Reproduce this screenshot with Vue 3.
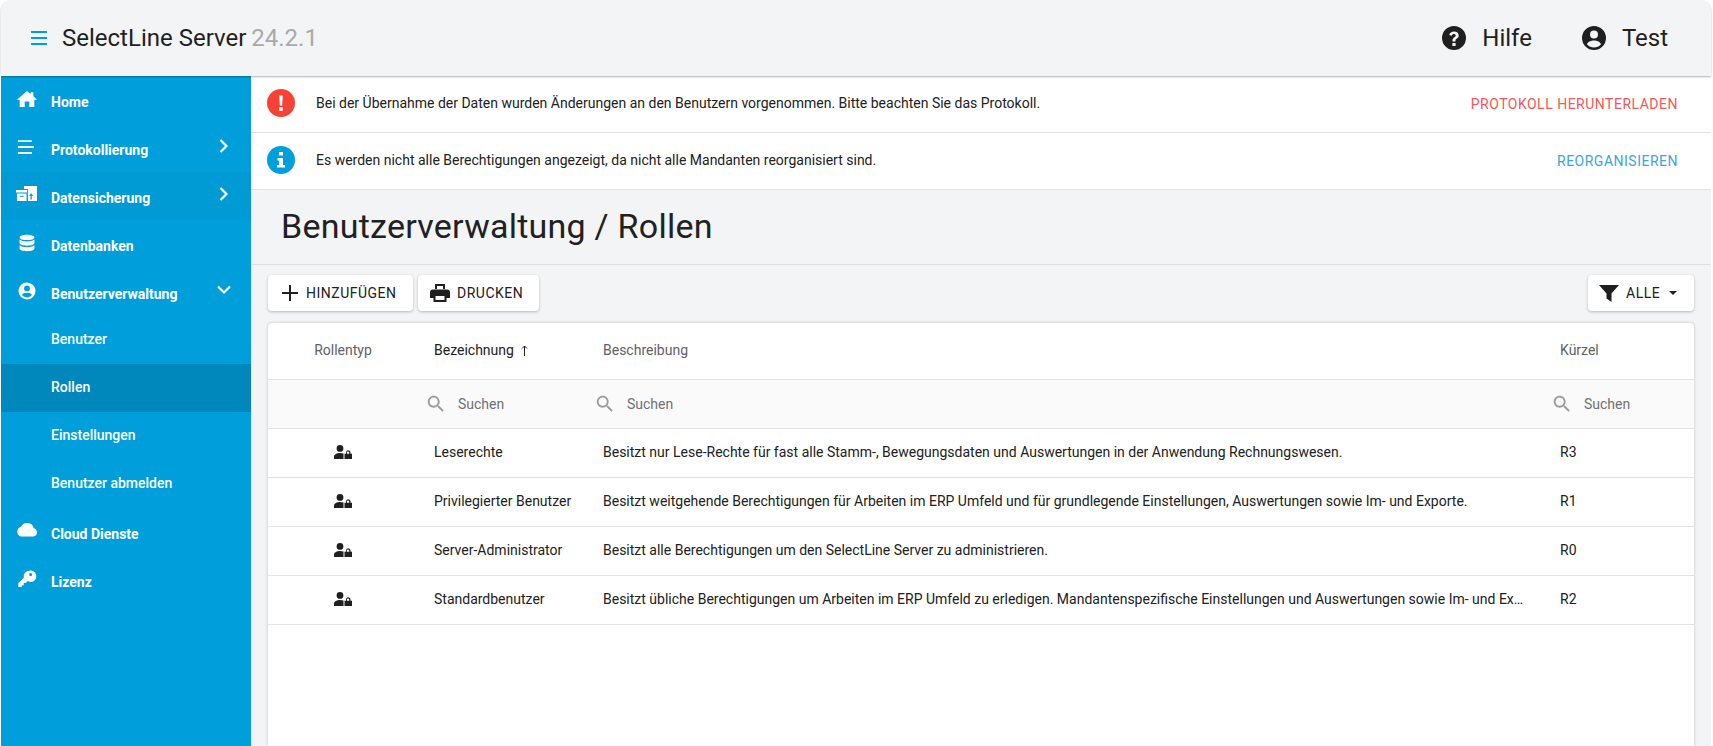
<script setup>
const navTop = [
  { label: 'Home', icon: 'home' },
  { label: 'Protokollierung', icon: 'list', arrow: 'right' },
  { label: 'Datensicherung', icon: 'backup', arrow: 'right', hover: true },
  { label: 'Datenbanken', icon: 'db' },
  { label: 'Benutzerverwaltung', icon: 'user', arrow: 'down' },
]
const navSub = [
  { label: 'Benutzer' },
  { label: 'Rollen', active: true },
  { label: 'Einstellungen' },
  { label: 'Benutzer abmelden' },
]
const navBottom = [
  { label: 'Cloud Dienste', icon: 'cloud' },
  { label: 'Lizenz', icon: 'key' },
]
const rows = [
  { name: 'Leserechte', desc: 'Besitzt nur Lese-Rechte für fast alle Stamm-, Bewegungsdaten und Auswertungen in der Anwendung Rechnungswesen.', code: 'R3' },
  { name: 'Privilegierter Benutzer', desc: 'Besitzt weitgehende Berechtigungen für Arbeiten im ERP Umfeld und für grundlegende Einstellungen, Auswertungen sowie Im- und Exporte.', code: 'R1' },
  { name: 'Server-Administrator', desc: 'Besitzt alle Berechtigungen um den SelectLine Server zu administrieren.', code: 'R0' },
  { name: 'Standardbenutzer', desc: 'Besitzt übliche Berechtigungen um Arbeiten im ERP Umfeld zu erledigen. Mandantenspezifische Einstellungen und Auswertungen sowie Im- und Exporte.', code: 'R2' },
]
const icons = {
  home: 'M12 3.300 L16 6.600 V4.500 H19 V9.100 L23 12.800 H20 V20.700 H14.500 V14.800 H9.500 V20.700 H4 V12.800 H1 Z',
  list: 'M2 4.500h15.300v2.100H2z M2 11h17.500v2.100H2z M2 17.500h15.300v2.100H2z',
  backup: 'M8.700 2.200H22.900V18.500H13V5.500H8.700z M16.500 10L18.800 12.800H17.200V17H15.800V12.800H14.200z M0 6.500H12V9.300H0z M1 10.400H11.500V18.500H1z M4 12.800h4.500V14H4z',
  db: 'M12 3c4.500 0 8.100 1.300 8.100 2.900s-3.600 2.900-8.100 2.900S3.900 7.500 3.900 5.900 7.500 3 12 3z M3.900 8.300c1.500 1.300 4.700 2.100 8.100 2.100s6.600-.8 8.100-2.100V12c0 1.600-3.600 2.900-8.100 2.900S3.900 13.600 3.900 12z M3.900 14.400c1.500 1.300 4.700 2.100 8.100 2.100s6.600-.8 8.100-2.100v3.700c0 1.600-3.600 2.900-8.100 2.900s-8.100-1.300-8.100-2.900z',
  user: 'M12 2.700a9.300 9.300 0 1 0 0 18.600a9.300 9.300 0 0 0 0-18.600z M12 6a3.200 3.200 0 1 1 0 6.400a3.200 3.200 0 0 1 0-6.400z M12 19a7 7 0 0 1-5.500-2.700c.3-1.600 3.200-2.500 5.500-2.500s5.200.9 5.500 2.500A7 7 0 0 1 12 19z',
  cloud: 'M19.400 9A7.500 7.500 0 0 0 5.400 7.400A5.500 5.500 0 0 0 5.500 18h13.500a4.600 4.600 0 0 0 .4-9z',
  key: 'M14.500 3a6.200 6.200 0 0 0-6 7.700L2.500 16.700V20.700h3.700V18.700h2.300v-2.300h2.300l1.900-2.100A6.200 6.200 0 1 0 14.500 3z M16 5.500a1.700 1.700 0 1 1 0 3.400a1.700 1.700 0 0 1 0-3.400z',
}
</script>

<template>
  <div class="shell">
    <header class="topbar">
      <div class="brand">
        <svg class="burger" viewBox="0 0 16 14" width="16" height="14"><path d="M0 0h16v2H0zM0 6h16v2H0zM0 12h16v2H0z" /></svg>
        <span class="product">SelectLine Server <span class="version">24.2.1</span></span>
      </div>
      <div class="top-actions">
        <div class="top-action">
          <svg viewBox="0 0 24 24" width="24" height="24"><path fill-rule="evenodd" d="M12 0a12 12 0 1 0 0 24a12 12 0 0 0 0-24z M10.500 15.500h3v-1c0-1 .6-1.400 1.400-2c.9-.7 1.800-1.500 1.800-3.100c0-2.500-2-3.900-4.700-3.900c-2.400 0-4.200 1.200-4.800 3.500l2.600.8c.3-1.200 1-1.800 2.100-1.800c1.100 0 1.800.6 1.800 1.500c0 .8-.5 1.200-1.200 1.700c-1.100.8-2 1.500-2 3.100z M10.400 17h3.200v2.900h-3.200z" /></svg>
          <span>Hilfe</span>
        </div>
        <div class="top-action">
          <svg viewBox="0 0 24 24" width="24" height="24"><path fill-rule="evenodd" d="M12 0a12 12 0 1 0 0 24a12 12 0 0 0 0-24z M12 4.500a4 4 0 1 1 0 8a4 4 0 0 1 0-8z M12 21.500a9.500 9.500 0 0 1-7-3.200c.4-2.300 4.300-3.800 7-3.800s6.600 1.500 7 3.800a9.500 9.500 0 0 1-7 3.200z" /></svg>
          <span>Test</span>
        </div>
      </div>
    </header>

    <div class="body">
      <nav class="sidebar">
        <div v-for="item in navTop" :key="item.label" class="nav-item" :class="{ hover: item.hover }">
          <svg class="nav-icon" viewBox="0 0 24 24" width="22" height="22"><path fill-rule="evenodd" :d="icons[item.icon]" /></svg>
          <span class="nav-label">{{ item.label }}</span>
          <svg v-if="item.arrow === 'right'" class="chev" viewBox="0 0 12 14" width="12" height="14"><path d="M2.500 1 L8.500 7 L2.500 13" /></svg>
          <svg v-if="item.arrow === 'down'" class="chev chev-down" viewBox="0 0 14 12" width="14" height="12"><path d="M1 2.500 L7 8.500 L13 2.500" /></svg>
        </div>
        <div v-for="item in navSub" :key="item.label" class="nav-sub" :class="{ active: item.active }">{{ item.label }}</div>
        <div v-for="item in navBottom" :key="item.label" class="nav-item">
          <svg class="nav-icon" viewBox="0 0 24 24" width="22" height="22"><path fill-rule="evenodd" :d="icons[item.icon]" /></svg>
          <span class="nav-label">{{ item.label }}</span>
        </div>
      </nav>

      <main class="main">
        <div class="notice">
          <span class="notice-icon red">
            <svg viewBox="0 0 28 28" width="28" height="28"><path d="M12.300 6.500h3.400l-.5 10h-2.400z M12.200 18.300h3.600v3.500h-3.600z" /></svg>
          </span>
          <span class="notice-text">Bei der Übernahme der Daten wurden Änderungen an den Benutzern vorgenommen. Bitte beachten Sie das Protokoll.</span>
          <span class="notice-action red-text">PROTOKOLL HERUNTERLADEN</span>
        </div>
        <div class="notice">
          <span class="notice-icon blue">
            <svg viewBox="0 0 28 28" width="28" height="28"><path d="M12 6h4v3.500h-4z M10.500 12h5.500v7h2v2.500h-8V19h2v-4.500h-1.500z" /></svg>
          </span>
          <span class="notice-text">Es werden nicht alle Berechtigungen angezeigt, da nicht alle Mandanten reorganisiert sind.</span>
          <span class="notice-action blue-text">REORGANISIEREN</span>
        </div>

        <div class="title-bar"><h1>Benutzerverwaltung / Rollen</h1></div>

        <div class="content">
          <div class="toolbar">
            <button class="btn">
              <svg viewBox="0 0 16 16" width="16" height="16"><path d="M7 0h2v7h7v2H9v7H7V9H0V7h7z" /></svg>
              <span>HINZUFÜGEN</span>
            </button>
            <button class="btn print">
              <svg viewBox="0 0 20 20" width="20" height="20"><path fill-rule="evenodd" d="M5 1h10v5h-2V3H7v3H5z M3 6.500h14a3 3 0 0 1 3 3V15h-3.500v4h-13v-4H0V9.500a3 3 0 0 1 3-3z M5.500 13v4h9v-4z" /></svg>
              <span>DRUCKEN</span>
            </button>
            <button class="btn filter">
              <svg viewBox="0 0 20 20" width="20" height="20"><path d="M0 2h20L12.500 10.500V19L7.500 15.500V10.500z" /></svg>
              <span>ALLE</span>
              <i class="caret"></i>
            </button>
          </div>

          <div class="card">
            <div class="tr head">
              <div class="td center">Rollentyp</div>
              <div class="td strong">Bezeichnung<svg class="sort" viewBox="0 0 7 11" width="7" height="11"><path d="M3.500 11V1M1 3.500L3.500 1L6 3.500" /></svg></div>
              <div class="td">Beschreibung</div>
              <div class="td">Kürzel</div>
            </div>
            <div class="tr search">
              <div class="td"></div>
              <div v-for="n in 3" :key="n" class="td search-cell">
                <svg viewBox="0 0 24 24" width="22" height="22"><path d="M15.500 14h-.79l-.28-.27C15.410 12.590 16 11.110 16 9.500 16 5.910 13.090 3 9.500 3S3 5.910 3 9.500 5.910 16 9.500 16c1.610 0 3.090-.59 4.230-1.570l.27.28v.79l5 4.990L20.490 19l-4.990-5zm-6 0C7.010 14 5 11.990 5 9.500S7.010 5 9.500 5 14 7.010 14 9.500 11.990 14 9.500 14z" /></svg>
                <span>Suchen</span>
              </div>
            </div>
            <div v-for="row in rows" :key="row.code" class="tr data">
              <div class="td center">
                <svg class="role" viewBox="0 0 18 14" width="18" height="14"><path d="M6 0a3.400 3.400 0 1 1 0 6.800a3.400 3.400 0 0 1 0-6.800z M0 14v-2.500C0 9.300 3.200 8 6 8c1.300 0 2.400.2 3.500.6V14z" /><path fill-rule="evenodd" d="M14 5.200a2.500 2.500 0 0 1 2.500 2.500V8.800H18V14h-7.500V8.800H12V7.700A2.500 2.500 0 0 1 14 5.200z M14 6.400a1.200 1.200 0 0 0-1.100 1.300v1.100h2.300V7.700A1.200 1.200 0 0 0 14 6.400z" /></svg>
              </div>
              <div class="td">{{ row.name }}</div>
              <div class="td ellipsis">{{ row.desc }}</div>
              <div class="td">{{ row.code }}</div>
            </div>
          </div>
        </div>
      </main>
    </div>
  </div>
</template>

<style>
html, body { margin: 0; background: #fff; overflow: hidden; }
</style>

<style scoped>
* { box-sizing: border-box; }
.shell {
  width: 1713px;
  height: 746px;
  padding: 0 2px 0 1px;
  display: flex;
  flex-direction: column;
  font-family: Roboto, "Liberation Sans", sans-serif;
  color: #212121;
  overflow: hidden;
}
.topbar {
  flex: 0 0 76px;
  display: flex;
  align-items: center;
  justify-content: space-between;
  background: #f3f4f6;
  border-radius: 10px 10px 0 0;
  box-shadow: 0 1px 2px rgba(0, 0, 0, .3);
  position: relative;
  z-index: 2;
  padding: 0 43px 0 30px;
}
.brand { display: flex; align-items: center; gap: 15px; }
.burger { fill: #009fdb; }
.product { font-size: 24px; color: #1f1f1f; line-height: 1; }
.version { color: #a9a9a9; margin-left: -1px; }
.top-actions { display: flex; gap: 50px; }
.top-action { display: flex; align-items: center; gap: 16px; font-size: 24px; }
.top-action svg { fill: #1f1f1f; }
.body { flex: 1; display: flex; min-height: 0; }
.sidebar { flex: 0 0 250px; background: #009fdb; color: #fff; }
.nav-item {
  height: 48px;
  display: flex;
  align-items: center;
  position: relative;
  padding-left: 15px;
  font-size: 14px;
  font-weight: 700;
}
.nav-item.hover { background: #009ad5; }
.nav-icon { fill: #fff; flex: none; margin-top: -2px; }
.nav-label { margin-left: 13px; margin-top: 4px; }
.chev { position: absolute; left: 217px; top: 15px; fill: none; stroke: #fff; stroke-width: 2.200; }
.chev-down { left: 216px; top: 16px; }
.nav-sub {
  height: 48px;
  display: flex;
  align-items: center;
  padding: 0 0 2px 50px;
  font-size: 14px;
  font-weight: 500;
}
.nav-sub.active { background: #0088bc; }
.main { flex: 1; min-width: 0; display: flex; flex-direction: column; background: #f3f4f6; }
.notice {
  flex: 0 0 57px;
  display: flex;
  align-items: center;
  background: #fff;
  border-bottom: 1px solid #e2e3e5;
  padding: 0 33px 0 16px;
  font-size: 14px;
}
.notice-icon { width: 28px; height: 28px; border-radius: 50%; flex: none; margin-top: -2px; }
.notice-icon svg { display: block; fill: #fff; }
.red { background: #f44336; }
.blue { background: #009fdb; }
.notice-text { margin-left: 21px; flex: 1; margin-top: -3px; }
.notice-action { font-size: 14px; letter-spacing: .5px; }
.red-text { color: #f2575a; }
.blue-text { color: #3da4dd; }
.title-bar {
  flex: 0 0 75px;
  border-bottom: 1px solid #dfe0e2;
  display: flex;
  align-items: center;
  padding: 0 0 2px 30px;
}
h1 { margin: 0; font-size: 34px; font-weight: 400; color: #212121; letter-spacing: .25px; }
.content { flex: 1; min-height: 0; display: flex; flex-direction: column; padding: 10px 17px 0 17px; }
.toolbar { flex: none; display: flex; gap: 5px; margin-bottom: 12px; }
.btn {
  height: 36px;
  display: flex;
  align-items: center;
  border: 0;
  border-radius: 4px;
  background: #fff;
  box-shadow: 0 1px 3px rgba(0, 0, 0, .25);
  font: 400 14px Roboto, sans-serif;
  letter-spacing: .5px;
  color: #212121;
  padding: 0 0 0 14px;
  gap: 8px;
  width: 145px;
}
.btn svg { fill: #1f1f1f; flex: none; }
.print { width: 121px; padding-left: 12px; gap: 7px; }
.filter { width: 106px; margin-left: auto; padding-left: 11px; gap: 7px; }
.caret { margin-left: 2px; border-left: 4px solid transparent; border-right: 4px solid transparent; border-top: 4px solid #212121; }
.card {
  flex: 1;
  background: #fff;
  border-radius: 4px 4px 0 0;
  box-shadow: 0 0 3px rgba(0, 0, 0, .25);
  font-size: 14px;
}
.tr {
  display: grid;
  grid-template-columns: 150px 169px 957px 1fr;
  height: 49px;
  border-bottom: 1px solid #e2e3e5;
  align-items: center;
}
.data { padding-bottom: 2px; }
.head { height: 57px; color: #5f6166; padding-bottom: 2px; }
.search { background: #fafafa; color: #6e7075; }
.td { padding: 0 16px; min-width: 0; white-space: nowrap; }
.center { text-align: center; padding: 0; }
.strong { color: #212121; display: flex; align-items: center; }
.sort { margin-left: 7px; fill: none; stroke: #212121; stroke-width: 1; }
.ellipsis { overflow: hidden; text-overflow: ellipsis; }
.search-cell { display: flex; align-items: center; padding-left: 7px; gap: 11px; }
.search-cell svg { fill: #9b9b9b; flex: none; }
.role { fill: #1f1f1f; display: block; margin: 0 auto; }
</style>
